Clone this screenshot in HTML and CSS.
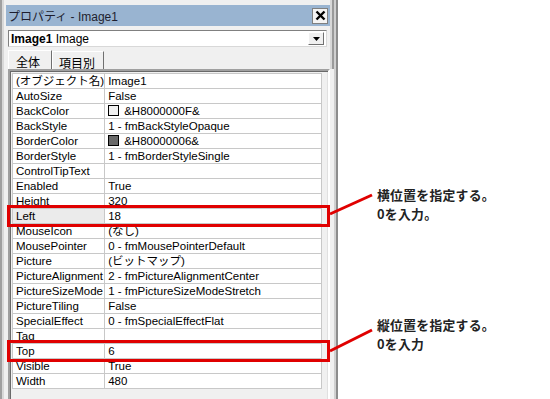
FILE: index.html
```html
<!DOCTYPE html>
<html>
<head>
    <title>プロパティ - Image1</title>
    <link rel="stylesheet" href="styles.css">
</head>
<body>
    <div class="page">
        <div class="window">
            <div class="titlebar">
                <span class="title">プロパティ - Image1</span>
                <span class="close">
                    <svg width="11" height="11" viewBox="0 0 11 11"><path d="M1.5 1.5 L9.5 9.5 M9.5 1.5 L1.5 9.5" stroke="#000" stroke-width="2.4"/></svg>
                </span>
            </div>
            <div class="combo">
                <span class="combo-text"><b>Image1</b> Image</span>
                <span class="combo-btn">
                    <svg width="7" height="4" viewBox="0 0 7 4"><path d="M0 0 H7 L3.5 4 Z" fill="#000"/></svg>
                </span>
            </div>
            <div class="tabs">
                <span class="tab active">全体</span>
                <span class="tab">項目別</span>
            </div>
            <div class="grid-frame">
                <table class="grid">
                    <tr><td>(オブジェクト名)</td><td>Image1</td></tr>
                    <tr><td>AutoSize</td><td>False</td></tr>
                    <tr><td>BackColor</td><td><span class="swatch light"></span>&amp;H8000000F&amp;</td></tr>
                    <tr><td>BackStyle</td><td>1 - fmBackStyleOpaque</td></tr>
                    <tr><td>BorderColor</td><td><span class="swatch dark"></span>&amp;H80000006&amp;</td></tr>
                    <tr><td>BorderStyle</td><td>1 - fmBorderStyleSingle</td></tr>
                    <tr><td>ControlTipText</td><td></td></tr>
                    <tr><td>Enabled</td><td>True</td></tr>
                    <tr><td>Height</td><td>320</td></tr>
                    <tr class="selected"><td>Left</td><td>18</td></tr>
                    <tr><td>MouseIcon</td><td>(なし)</td></tr>
                    <tr><td>MousePointer</td><td>0 - fmMousePointerDefault</td></tr>
                    <tr><td>Picture</td><td>(ビットマップ)</td></tr>
                    <tr><td>PictureAlignment</td><td>2 - fmPictureAlignmentCenter</td></tr>
                    <tr><td>PictureSizeMode</td><td>1 - fmPictureSizeModeStretch</td></tr>
                    <tr><td>PictureTiling</td><td>False</td></tr>
                    <tr><td>SpecialEffect</td><td>0 - fmSpecialEffectFlat</td></tr>
                    <tr><td>Tag</td><td></td></tr>
                    <tr><td>Top</td><td>6</td></tr>
                    <tr><td>Visible</td><td>True</td></tr>
                    <tr><td>Width</td><td>480</td></tr>
                </table>
            </div>
        </div>

        <!-- callouts drawn over the panel -->
        <div class="mark mark-left"></div>
        <div class="mark mark-top"></div>
        <svg class="leaders" width="550" height="399" viewBox="0 0 550 399">
            <path d="M330 214 L372 195" stroke="#e00000" stroke-width="3" fill="none"/>
            <path d="M330 351 L372 330" stroke="#e00000" stroke-width="3" fill="none"/>
        </svg>
        <div class="note note-left"><div>横位置を指定する。</div><div>0を入力。</div></div>
        <div class="note note-top"><div>縦位置を指定する。</div><div>0を入力</div></div>
    </div>
</body>
</html>
```

FILE: styles.css
```css
body {
    margin: 0;
    background: #fff;
    font-family: "Liberation Sans", "Noto Sans CJK JP", sans-serif;
}

.page {
    position: relative;
    width: 550px;
    height: 399px;
    overflow: hidden;
}

.window {
    width: 334px;
    height: 399px;
    box-sizing: border-box;
    background: #f0f0f0;
    border-left: 2px solid #a0a0a0;
    border-right: 2px solid #9a9a9a;
    box-shadow: inset 2px 0 0 #d8d8d8, inset -2px 0 0 #d8d8d8, 2px 0 0 #d0d0d0, 4px 0 0 #8c8c8c;
    padding: 5px 0 0 4px;
    display: flex;
    flex-direction: column;
}

.titlebar {
    height: 21px;
    width: 324px;
    background: #99b4d1;
    display: flex;
    align-items: center;
    justify-content: space-between;
    box-sizing: border-box;
    padding: 0 2px 0 2px;
}

.title {
    font-size: 12px;
    color: #1e1e2e;
}

.close {
    width: 16px;
    height: 16px;
    box-sizing: border-box;
    background: #f4f4f4;
    border: 1px solid #808080;
    display: flex;
    align-items: center;
    justify-content: center;
}

.combo {
    margin: 4px 0 0 2px;
    width: 319px;
    height: 17px;
    box-sizing: border-box;
    background: #fff;
    border: 1px solid #808080;
    border-right-color: #d8d8d8;
    border-bottom-color: #d8d8d8;
    display: flex;
    align-items: center;
    justify-content: space-between;
    padding-left: 2px;
}

.combo-text {
    font-size: 12px;
    color: #000;
}

.combo-btn {
    width: 16px;
    height: 13px;
    margin-right: 2px;
    box-sizing: border-box;
    background: #f0f0f0;
    border: 1px solid #fff;
    border-right-color: #707070;
    border-bottom-color: #707070;
    display: flex;
    align-items: center;
    justify-content: center;
}

.tabs {
    display: flex;
    margin: 3px 0 0 2px;
    height: 19px;
    align-items: flex-end;
}

.tab {
    font-size: 12px;
    color: #000;
    height: 18px;
    box-sizing: border-box;
    padding: 2px 8px 0 6px;
    border-top: 1px solid #fff;
    border-left: 1px solid #fff;
    border-right: 1px solid #707070;
}

.tab.active {
    height: 19px;
    width: 44px;
    padding-left: 7px;
}

.grid-frame {
    margin: 0 0 0 2px;
    width: 322px;
    flex: 1;
    box-sizing: border-box;
    border: 2px solid #a0a0a0;
    border-right-color: #fff;
    border-bottom: none;
    box-shadow: inset 1px 1px 0 #696969, inset -1px 0 0 #e0e0e0, 4px 0 0 #f0f0f0;
    padding: 2px 8px 0 2px;
    background: #f0f0f0;
}

.grid {
    border-collapse: collapse;
    width: 310px;
    background: #fff;
    font-size: 11.5px;
    color: #000;
}

.grid td {
    height: 15px;
    padding: 0 0 0 3px;
    border: 1px solid #c8c8c8;
    white-space: nowrap;
    box-sizing: border-box;
    line-height: 13px;
}

.grid td:first-child {
    width: 92px;
}

.grid tr.selected td:first-child {
    background: #ebebeb;
}

.swatch {
    display: inline-block;
    width: 9px;
    height: 9px;
    border: 1px solid #000;
    margin: 0 5px -1px 0;
}

.swatch.light {
    background: #f0f0f0;
}

.swatch.dark {
    background: #696969;
}

.mark {
    position: absolute;
    left: 7px;
    width: 323px;
    height: 22px;
    box-sizing: border-box;
    border: 3px solid #e00000;
}

.mark-left {
    top: 205px;
}

.mark-top {
    top: 340px;
}

.leaders {
    position: absolute;
    left: 0;
    top: 0;
    pointer-events: none;
}

.note {
    position: absolute;
    left: 377px;
    font-family: "Noto Sans CJK JP", sans-serif;
    font-weight: bold;
    font-size: 12.8px;
    line-height: 19px;
    letter-spacing: 0.3px;
    color: #222;
}

.note-left {
    top: 185px;
}

.note-top {
    top: 315px;
}
```
